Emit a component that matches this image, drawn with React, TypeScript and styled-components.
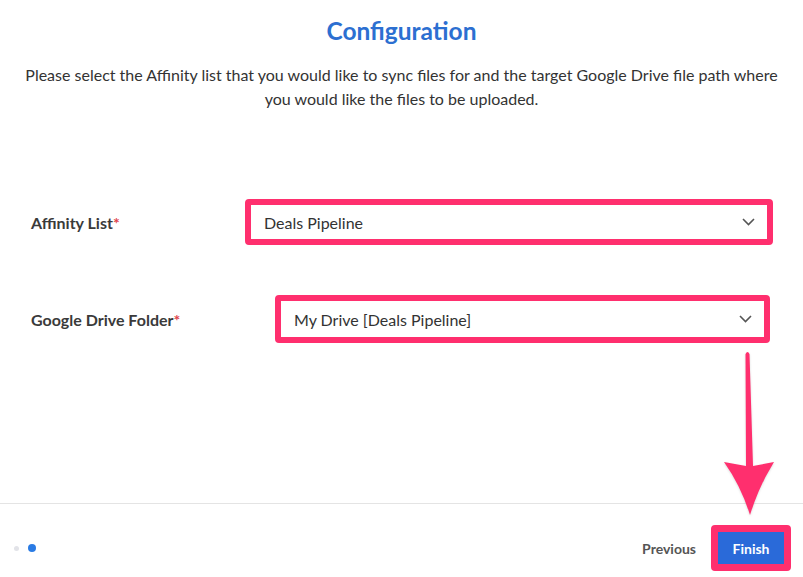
import React from 'react'
import styled, { createGlobalStyle } from 'styled-components'

const GlobalStyle = createGlobalStyle`
  *, *::before, *::after {
    box-sizing: border-box;
  }
  html, body {
    margin: 0;
    padding: 0;
    background: #ffffff;
  }
  body {
    font-family: Lato, "Noto Sans", sans-serif;
    color: #333;
  }
`

const PINK = '#ff2f6e'

const Page = styled.div`
  position: relative;
  width: 803px;
  height: 577px;
  display: flex;
  flex-direction: column;
  overflow: hidden;
  background: #fff;
`

const Header = styled.div`
  padding-top: 16px;
  text-align: center;
`

const Title = styled.h1`
  margin: 0;
  font-size: 24.5px;
  line-height: 30px;
  font-weight: 700;
  color: #2c6fd1;
`

const Intro = styled.p`
  margin: 17px auto 0;
  width: 770px;
  font-size: 16px;
  line-height: 24px;
  color: #333;
`

const Form = styled.div`
  margin-top: 88px;
  display: flex;
  flex-direction: column;
  gap: 50px;
`

const Row = styled.div<{ $indent: number }>`
  display: grid;
  grid-template-columns: ${p => p.$indent}px 1fr;
  align-items: center;
  padding-left: 31px;
`

const Label = styled.label`
  font-size: 16px;
  font-weight: 700;
  color: #3a3a3a;

  span {
    color: #e0454b;
  }
`

const Select = styled.div<{ $width: number; $height: number }>`
  width: ${p => p.$width}px;
  height: ${p => p.$height}px;
  border: 6px solid ${PINK};
  border-radius: 4px;
  background: #fff;
  display: flex;
  align-items: center;
  justify-content: space-between;
  padding: 0 12px 0 13px;
  font-size: 16px;
  color: #333;
`

const Spacer = styled.div`
  flex: 1;
`

const Footer = styled.div`
  height: 74px;
  border-top: 1px solid #e4e4e4;
  display: flex;
  align-items: flex-start;
  justify-content: space-between;
  padding: 21px 12px 0 14px;
`

const Dots = styled.div`
  display: flex;
  align-items: center;
  gap: 9px;
  height: 46px;
`

const Dot = styled.i<{ $active?: boolean }>`
  display: block;
  width: ${p => (p.$active ? 8 : 5)}px;
  height: ${p => (p.$active ? 8 : 5)}px;
  border-radius: 50%;
  background: ${p => (p.$active ? '#2a7be4' : '#e2e3e8')};
`

const Actions = styled.div`
  display: flex;
  align-items: center;
  gap: 15px;
  height: 46px;
`

const LinkButton = styled.button`
  border: 0;
  background: none;
  padding: 0;
  font-family: inherit;
  font-size: 14px;
  font-weight: 700;
  color: #555;
`

const FinishFrame = styled.div`
  width: 80px;
  height: 46px;
  border: 7px solid ${PINK};
  border-radius: 4px;
  display: flex;
`

const PrimaryButton = styled.button`
  flex: 1;
  border: 0;
  background: #2a6ad9;
  color: #fff;
  font-family: inherit;
  font-size: 14px;
  font-weight: 700;
  padding: 0;
`

const Arrow = styled.svg`
  position: absolute;
  left: 720px;
  top: 350px;
  width: 60px;
  height: 170px;
  filter: drop-shadow(0 1px 1px rgba(0, 0, 0, 0.15));
`

const Chevron = () => (
  <svg width="13" height="8" viewBox="0 0 13 8" fill="none">
    <path d="M1 1l5.5 5.5L12 1" stroke="#555" strokeWidth="1.6" />
  </svg>
)

export default function App() {
  return (
    <Page>
      <GlobalStyle />
      <Header>
        <Title>Configuration</Title>
        <Intro>
          Please select the Affinity list that you would like to sync files for and the target Google
          Drive file path where you would like the files to be uploaded.
        </Intro>
      </Header>

      <Form>
        <Row $indent={214}>
          <Label>
            Affinity List<span>*</span>
          </Label>
          <Select $width={528} $height={46}>
            Deals Pipeline
            <Chevron />
          </Select>
        </Row>
        <Row $indent={244}>
          <Label>
            Google Drive Folder<span>*</span>
          </Label>
          <Select $width={495} $height={48}>
            My Drive [Deals Pipeline]
            <Chevron />
          </Select>
        </Row>
      </Form>

      <Spacer />

      <Footer>
        <Dots>
          <Dot />
          <Dot $active />
        </Dots>
        <Actions>
          <LinkButton>Previous</LinkButton>
          <FinishFrame>
            <PrimaryButton>Finish</PrimaryButton>
          </FinishFrame>
        </Actions>
      </Footer>

      <Arrow viewBox="0 0 60 170">
        <path
          d="M25.5 4 Q27.5 0 29.5 4 L33 116 L54 112 Q39 136 30 165 Q21 136 4 112 L26 116 Z"
          fill={PINK}
        />
      </Arrow>
    </Page>
  )
}
